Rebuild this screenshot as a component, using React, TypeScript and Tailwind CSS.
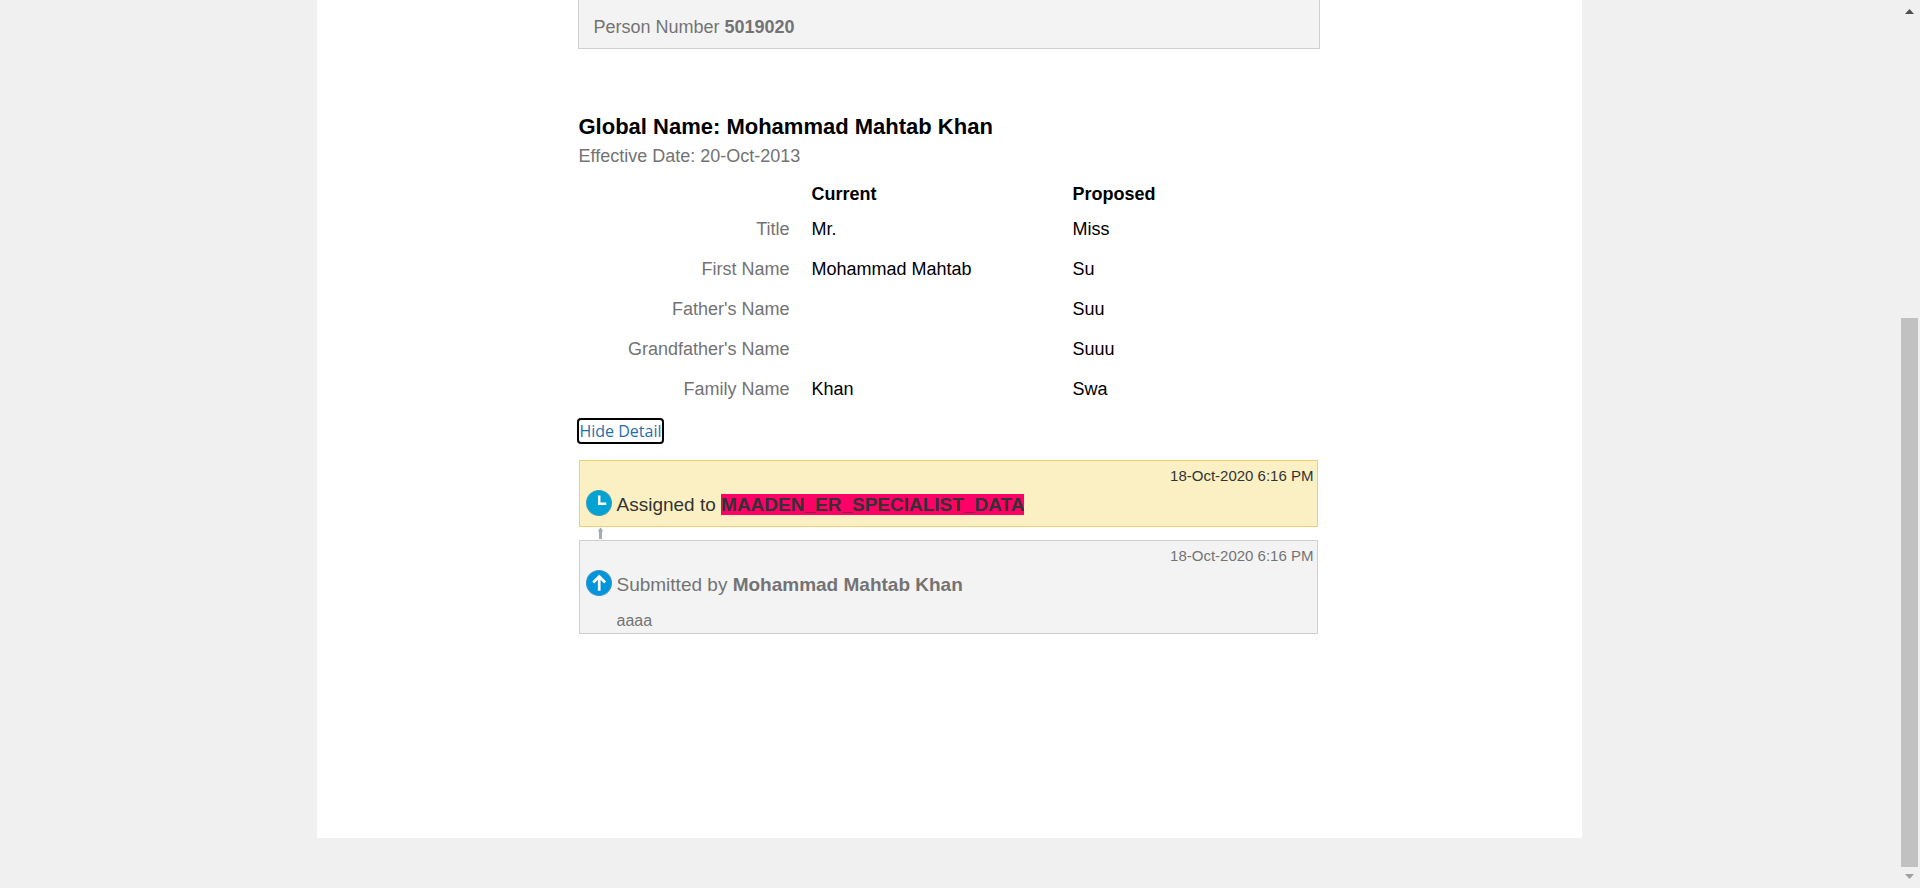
import React from "react";

type NameRow = { label: string; current: string; proposed: string };

const rows: NameRow[] = [
  { label: "Title", current: "Mr.", proposed: "Miss" },
  { label: "First Name", current: "Mohammad Mahtab", proposed: "Su" },
  { label: "Father's Name", current: "", proposed: "Suu" },
  { label: "Grandfather's Name", current: "", proposed: "Suuu" },
  { label: "Family Name", current: "Khan", proposed: "Swa" },
];

function ClockIcon() {
  return (
    <svg className="mt-px size-[26px] shrink-0" viewBox="0 0 25 25" aria-hidden="true">
      <circle cx="12.5" cy="12.5" r="12" fill="#00a3d4" stroke="#3a9fb8" />
      <path d="M12.7 5.3V13.2H19.5" fill="none" stroke="#fff" strokeWidth="2.4" />
    </svg>
  );
}

function SubmitIcon() {
  return (
    <svg className="mt-px size-[26px] shrink-0" viewBox="0 0 25 25" aria-hidden="true">
      <circle cx="12.5" cy="12.5" r="12" fill="#0095dc" stroke="#3a97c4" />
      <path d="M12.7 20V6.5M7 12L12.7 6.2L18.4 12" fill="none" stroke="#fff" strokeWidth="2.6" />
    </svg>
  );
}

function Connector() {
  return (
    <svg className="ml-[18px] block h-[13px] w-[7px]" viewBox="0 0 7 13" aria-hidden="true">
      <path d="M3.5 0.5L6.3 4.5H0.7Z" fill="#98a3ac" />
      <path d="M3.5 3V12" stroke="#a3adb5" strokeWidth="3" />
    </svg>
  );
}

function Scrollbar() {
  return (
    <div className="flex w-[21px] shrink-0 flex-col items-center pt-[9px] pb-[9px]" aria-hidden="true">
      <svg className="h-[5px] w-[9px]" viewBox="0 0 9 5">
        <path d="M4.5 0L9 5H0Z" fill="#505050" />
      </svg>
      <div className="flex-[304]" />
      <div className="w-[17px] flex-[549] bg-[#c1c1c1]" />
      <svg className="mt-[7px] h-[5px] w-[9px]" viewBox="0 0 9 5">
        <path d="M4.5 5L9 0H0Z" fill="#a0a0a0" />
      </svg>
    </div>
  );
}

export default function App() {
  return (
    <div className="flex min-h-screen bg-[#f0f0f0] font-['Liberation_Sans',Arial,sans-serif] text-[18px] leading-6 text-black">
      <div className="flex flex-1 justify-center pb-[50px]">
        <main className="w-2/3 bg-white pb-10">
          <div className="mx-auto max-w-[742px]">
            <section className="border border-t-0 border-[#cfcfcf] bg-[#f3f3f3] px-[14px] pt-[15px] pb-[9px] text-[#737373]">
              Person Number <b>5019020</b>
            </section>

            <h2 className="mt-16 text-[22px] leading-7 font-bold">Global Name: Mohammad Mahtab Khan</h2>
            <p className="mt-[3px] text-[#737373]">Effective Date: 20-Oct-2013</p>

            <table className="w-full table-fixed border-collapse text-left">
              <thead>
                <tr>
                  <td className="w-[233px]" />
                  <th scope="col" className="w-[261px] px-0 pt-[14px] pb-[3px] font-bold">Current</th>
                  <th scope="col" className="px-0 pt-[14px] pb-[3px] font-bold">Proposed</th>
                </tr>
              </thead>
              <tbody>
                {rows.map((r) => (
                  <tr key={r.label}>
                    <th scope="row" className="py-2 pr-[22px] text-right font-normal text-[#737373]">{r.label}</th>
                    <td className="py-2">{r.current}</td>
                    <td className="py-2">{r.proposed}</td>
                  </tr>
                ))}
              </tbody>
            </table>

            <button
              type="button"
              className="mt-[9px] -ml-px block rounded border-2 border-black pt-px font-['Open_Sans','Noto_Sans',sans-serif] text-[16px] leading-[21px] text-[#1f6fa8]"
            >
              Hide Detail
            </button>

            <ol className="mr-[2px] ml-px mt-4">
              <li className="border border-[#f0cf74] bg-[#fbf0c3] pt-[5px] pb-[9px] text-[#333333]">
                <time className="block pr-1 text-right text-[15px] leading-5">18-Oct-2020 6:16 PM</time>
                <div className="mt-[3px] flex gap-1 pl-[6px]">
                  <ClockIcon />
                  <p className="pt-1 text-[19px] leading-[24px]">
                    Assigned to <b className="bg-[#ff0066]">MAADEN_ER_SPECIALIST_DATA</b>
                  </p>
                </div>
              </li>
              <li>
                <Connector />
                <div className="border border-[#cfcfcf] bg-[#f3f3f3] pt-[5px] text-[#737373]">
                  <time className="block pr-1 text-right text-[15px] leading-5">18-Oct-2020 6:16 PM</time>
                  <div className="mt-[3px] flex gap-1 pl-[6px]">
                    <SubmitIcon />
                    <p className="pt-1 text-[19px] leading-[24px]">
                      Submitted by <b>Mohammad Mahtab Khan</b>
                    </p>
                  </div>
                  <p className="mt-3 pl-9 text-[16px]">aaaa</p>
                </div>
              </li>
            </ol>
          </div>
        </main>
      </div>
      <Scrollbar />
    </div>
  );
}
